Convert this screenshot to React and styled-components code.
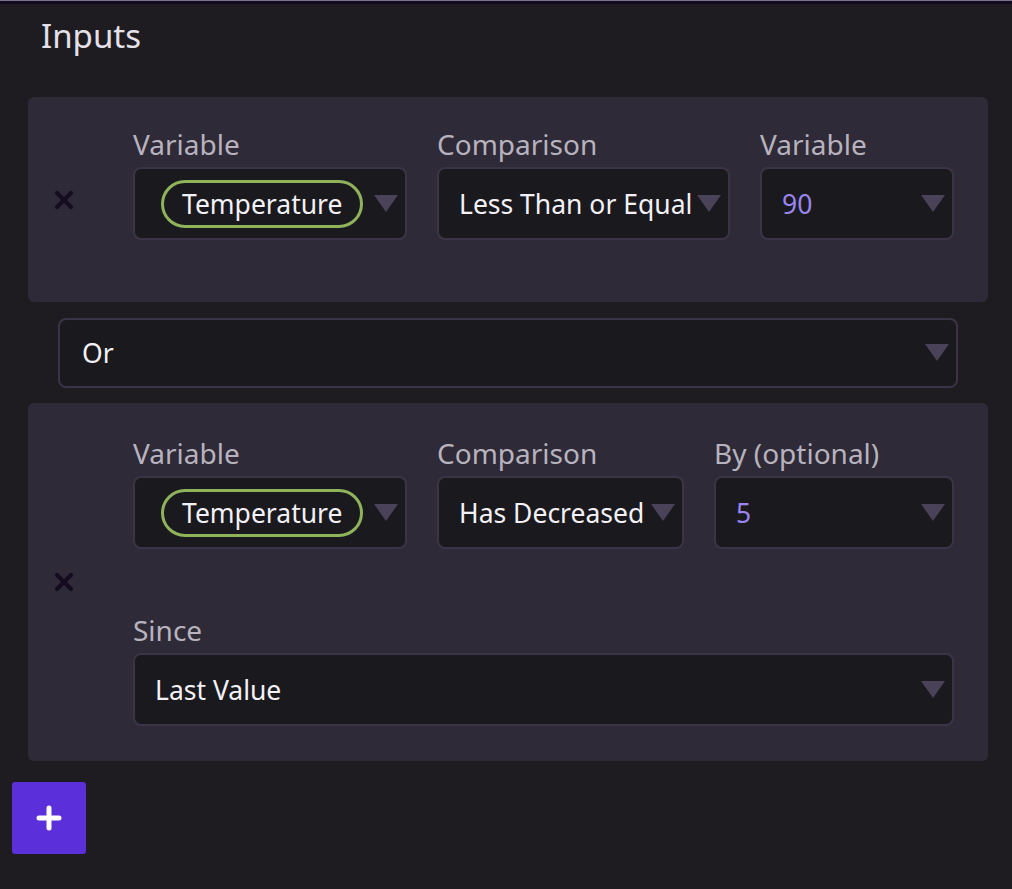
import React from "react";
import styled, { createGlobalStyle } from "styled-components";

const Global = createGlobalStyle`
  html, body { margin: 0; padding: 0; background: #1e1c21; }
  body { font-family: "Noto Sans", "Open Sans", sans-serif; }
  * { box-sizing: border-box; }
`;

const Page = styled.div`
  min-height: 889px;
  border-top: 1px solid #77748a;
  box-shadow: inset 0 3px 0 #130a22;
  padding: 0 24px 0 28px;
`;

const Title = styled.h2`
  margin: 0;
  padding: 13px 0 0 13px;
  height: 96px;
  font-size: 33px;
  font-weight: 400;
  color: #e4e1ea;
  line-height: 44px;
`;

const Card = styled.div`
  background: #2f2a37;
  border-radius: 6px;
  display: flex;
  align-items: stretch;
  padding-right: 34px;
`;

const RemoveCol = styled.div`
  width: 105px;
  flex: none;
  display: flex;
  align-items: center;
  justify-content: center;
  padding-right: 34px;
`;

const Body = styled.div`
  flex: 1;
  display: flex;
  flex-direction: column;
  gap: ${(p) => p.$gap || 0}px;
  padding: ${(p) => p.$pad};
`;

const Row = styled.div`
  display: flex;
  gap: 30px;
`;

const Field = styled.div`
  display: flex;
  flex-direction: column;
  width: ${(p) => (p.$w ? `${p.$w}px` : "auto")};
  flex: ${(p) => (p.$w ? "none" : "1")};
`;

const Label = styled.div`
  font-size: 28px;
  line-height: 30px;
  color: #b7b3be;
  margin-bottom: 8px;
  white-space: nowrap;
`;

const SelectBox = styled.div`
  height: ${(p) => p.$h || 73}px;
  background: #1a191e;
  border: 2px solid #3b3447;
  border-radius: 8px;
  display: flex;
  align-items: center;
  padding: 0 7px 0 ${(p) => p.$pl || 20}px;
  gap: 6px;
`;

const Value = styled.span`
  flex: 1;
  font-size: 26.5px;
  color: ${(p) => (p.$num ? "#9a85f2" : "#f3f1f6")};
  white-space: nowrap;
  overflow: hidden;
`;

const Pill = styled.span`
  display: inline-flex;
  align-items: center;
  height: 48px;
  padding: 0 18px;
  border: 3px solid #8fb35b;
  border-radius: 24px;
  font-size: 26.5px;
  color: #f3f1f6;
  white-space: nowrap;
`;

const PillWrap = styled.div`
  flex: 1;
  display: flex;
`;

const OrWrap = styled.div`
  padding: 16px 30px 15px;
`;

const AddButton = styled.button`
  margin: 21px 0 0 -16px;
  width: 74px;
  height: 72px;
  border: none;
  border-radius: 3px;
  background: #5b2fd9;
  display: flex;
  align-items: center;
  justify-content: center;
  cursor: pointer;
`;

const Arrow = () => (
  <svg width="24" height="18" viewBox="0 0 24 18" style={{ flex: "none" }}>
    <polygon points="0,0 24,0 12,17" fill="#4a4258" />
  </svg>
);

const XIcon = () => (
  <svg width="20" height="20" viewBox="0 0 20 20">
    <path d="M3 3 L17 17 M17 3 L3 17" stroke="#160c22" strokeWidth="4.2" strokeLinecap="round" />
  </svg>
);

const PlusIcon = () => (
  <svg width="26" height="26" viewBox="0 0 26 26">
    <path d="M13 3 V23 M3 13 H23" stroke="#ffffff" strokeWidth="5" strokeLinecap="round" />
  </svg>
);

const Select = ({ children, num, pill, h, pl }) => (
  <SelectBox $h={h} $pl={pill ? 26 : pl}>
    {pill ? (
      <PillWrap>
        <Pill>{children}</Pill>
      </PillWrap>
    ) : (
      <Value $num={num}>{children}</Value>
    )}
    <Arrow />
  </SelectBox>
);

export default function App() {
  return (
    <>
      <Global />
      <Page>
        <Title>Inputs</Title>
        <Card>
          <RemoveCol>
            <XIcon />
          </RemoveCol>
          <Body $pad="32px 0 62px">
            <Row>
              <Field $w={274}>
                <Label>Variable</Label>
                <Select pill>Temperature</Select>
              </Field>
              <Field $w={293}>
                <Label>Comparison</Label>
                <Select>Less Than or Equal</Select>
              </Field>
              <Field>
                <Label>Variable</Label>
                <Select num>90</Select>
              </Field>
            </Row>
          </Body>
        </Card>
        <OrWrap>
          <Select h={70} pl={22}>Or</Select>
        </OrWrap>
        <Card>
          <RemoveCol>
            <XIcon />
          </RemoveCol>
          <Body $pad="35px 0 35px" $gap={66}>
            <Row>
              <Field $w={274}>
                <Label>Variable</Label>
                <Select pill>Temperature</Select>
              </Field>
              <Field $w={247}>
                <Label>Comparison</Label>
                <Select>Has Decreased</Select>
              </Field>
              <Field>
                <Label>By (optional)</Label>
                <Select num>5</Select>
              </Field>
            </Row>
            <Row>
              <Field>
                <Label>Since</Label>
                <Select>Last Value</Select>
              </Field>
            </Row>
          </Body>
        </Card>
        <AddButton aria-label="Add">
          <PlusIcon />
        </AddButton>
      </Page>
    </>
  );
}
